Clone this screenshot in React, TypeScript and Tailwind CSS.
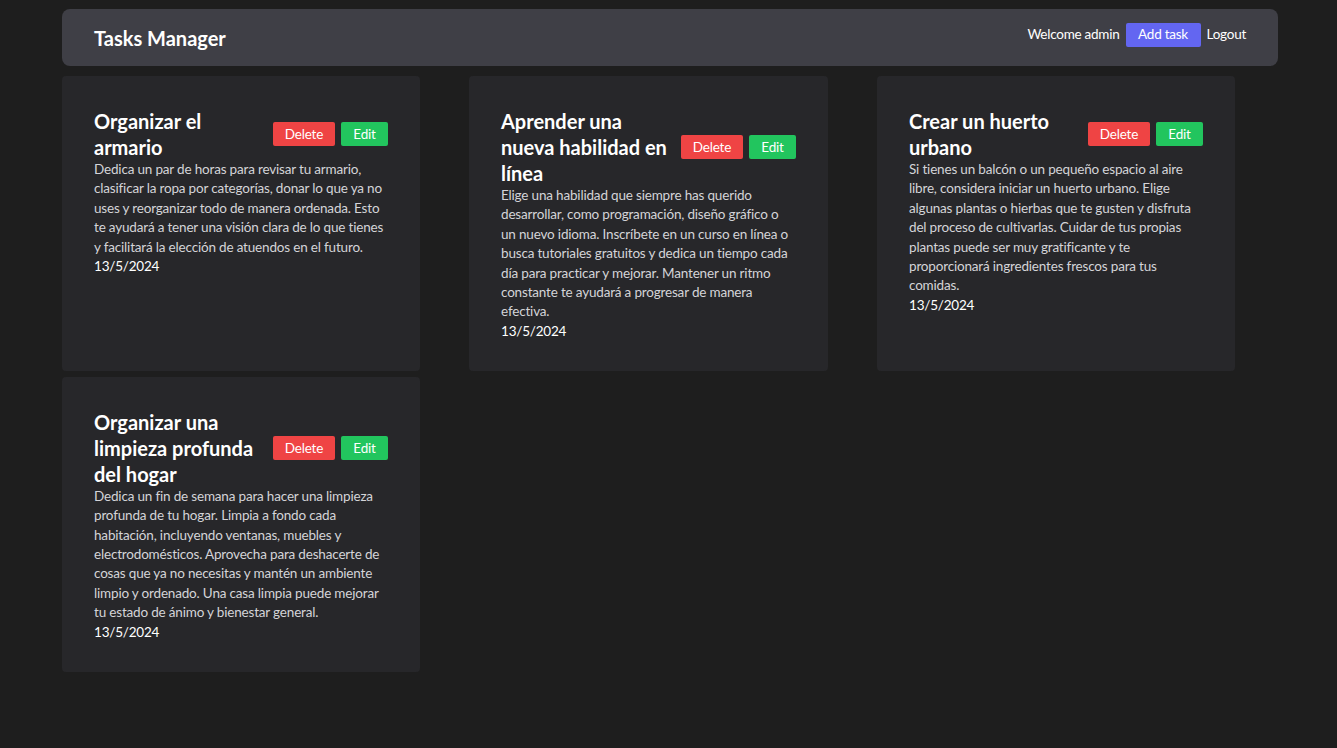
import React from "react";

interface Task {
  id: number;
  title: string;
  description: string;
  date: string;
}

const tasks: Task[] = [
  {
    id: 1,
    title: "Organizar el armario",
    description:
      "Dedica un par de horas para revisar tu armario, clasificar la ropa por categorías, donar lo que ya no uses y reorganizar todo de manera ordenada. Esto te ayudará a tener una visión clara de lo que tienes y facilitará la elección de atuendos en el futuro.",
    date: "13/5/2024",
  },
  {
    id: 2,
    title: "Aprender una nueva habilidad en línea",
    description:
      "Elige una habilidad que siempre has querido desarrollar, como programación, diseño gráfico o un nuevo idioma. Inscríbete en un curso en línea o busca tutoriales gratuitos y dedica un tiempo cada día para practicar y mejorar. Mantener un ritmo constante te ayudará a progresar de manera efectiva.",
    date: "13/5/2024",
  },
  {
    id: 3,
    title: "Crear un huerto urbano",
    description:
      "Si tienes un balcón o un pequeño espacio al aire libre, considera iniciar un huerto urbano. Elige algunas plantas o hierbas que te gusten y disfruta del proceso de cultivarlas. Cuidar de tus propias plantas puede ser muy gratificante y te proporcionará ingredientes frescos para tus comidas.",
    date: "13/5/2024",
  },
  {
    id: 4,
    title: "Organizar una limpieza profunda del hogar",
    description:
      "Dedica un fin de semana para hacer una limpieza profunda de tu hogar. Limpia a fondo cada habitación, incluyendo ventanas, muebles y electrodomésticos. Aprovecha para deshacerte de cosas que ya no necesitas y mantén un ambiente limpio y ordenado. Una casa limpia puede mejorar tu estado de ánimo y bienestar general.",
    date: "13/5/2024",
  },
];

const TaskCard = ({ task }: { task: Task }) => {
  return (
    <div className="bg-[#27272a] rounded p-8 flex flex-col">
      <div className="flex items-center justify-between gap-[7px]">
        <h2 className="text-[20px] leading-[26px] font-bold text-white">{task.title}</h2>
        <div className="flex gap-1.5 shrink-0 text-[13.5px] tracking-[-0.2px]">
          <button className="bg-[#ef4444] text-white h-6 w-[62px] rounded-xs">Delete</button>
          <button className="bg-[#22c55e] text-white h-6 w-[47px] rounded-xs">Edit</button>
        </div>
      </div>
      <p className="text-[13.5px] tracking-[-0.18px] leading-[19.4px] text-[#d4d4d8]">{task.description}</p>
      <p className="text-[13.5px] tracking-[-0.2px] leading-[16px] pt-px text-white">{task.date}</p>
    </div>
  );
};

const App = () => {
  return (
    <div
      className="min-h-screen bg-[#1e1e1e] pt-[9px]"
      style={{ fontFamily: '"Segoe UI", Lato, "Noto Sans", sans-serif' }}
    >
      <div className="w-[1216px] ml-[62px]">
        <nav className="bg-[#3f3f46] rounded-lg h-[57px] px-8 flex items-center justify-between">
          <h1 className="text-[20px] font-bold text-white">Tasks Manager</h1>
          <div className="flex items-center gap-1.5 text-[13.5px] tracking-[-0.25px] text-white mb-[6px]">
            <span>Welcome admin</span>
            <button className="bg-[#6366f1] h-6 w-[75px] rounded-xs">Add task</button>
            <button>Logout</button>
          </div>
        </nav>
        <div className="grid grid-cols-[358px_359px_358px] gap-x-[49px] gap-y-1.5 mt-[10px]">
          {tasks.map((task) => (
            <TaskCard key={task.id} task={task} />
          ))}
        </div>
      </div>
    </div>
  );
};

export default App;
